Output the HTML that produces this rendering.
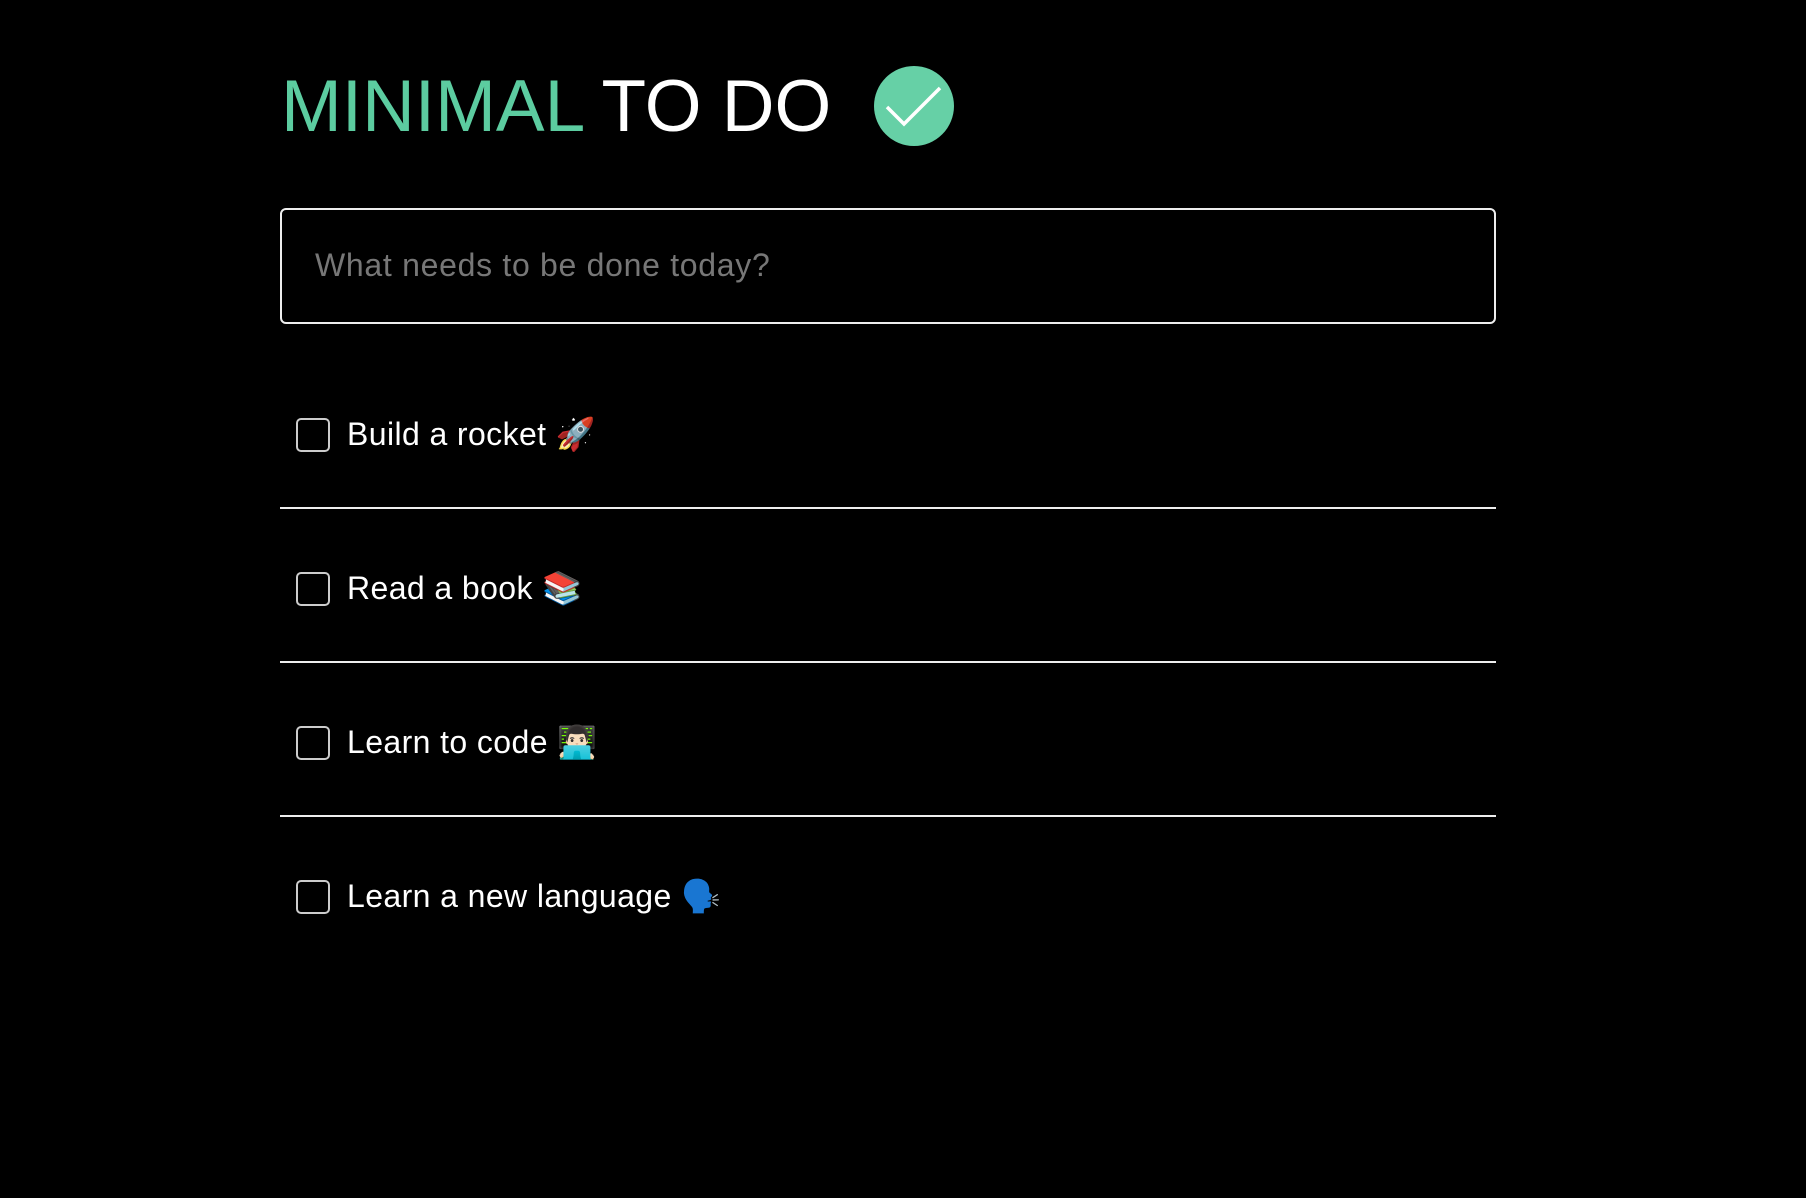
<!DOCTYPE html>
<html><head><meta charset="utf-8"><style>
html,body{margin:0;padding:0;background:#000;width:1806px;height:1198px;overflow:hidden}
body{font-family:"Liberation Sans","Noto Color Emoji",sans-serif;color:#fff;position:relative}
.title{position:absolute;left:281px;top:64px;font-size:73px;line-height:86px;white-space:nowrap;letter-spacing:0px}
.title .g{color:#5ccca0}
.circle{position:absolute;left:874px;top:66px;width:80px;height:80px;border-radius:50%;background:#66d0a6}
.input{position:absolute;left:280px;top:208px;width:1212px;height:112px;border:2px solid #eee;border-radius:6px;box-sizing:content-box}
.ph{position:absolute;left:315px;top:246px;font-size:32px;line-height:38px;color:#777;white-space:nowrap;letter-spacing:0.7px}
.item{position:absolute;left:296px;height:34px;width:900px}
.cb{position:absolute;left:0;top:0;width:30px;height:30px;border:2px solid #ccc;border-radius:5px}
.txt{position:absolute;left:51px;top:-3px;font-size:32px;line-height:38px;white-space:nowrap;letter-spacing:0.4px}
.sep{position:absolute;left:280px;width:1216px;height:2px;background:#eee}
</style></head><body>
<div class="title"><span class="g">MINIMAL</span> TO DO</div>
<div class="circle"><svg width="80" height="80" viewBox="0 0 80 80"><polyline points="13,41 30,58 66,22" fill="none" stroke="#fff" stroke-width="3.5"/></svg></div>
<div class="input"></div>
<div class="ph">What needs to be done today?</div>
<div class="item" style="top:418px"><div class="cb"></div><div class="txt">Build a rocket 🚀</div></div>
<div class="sep" style="top:507px"></div>
<div class="item" style="top:572px"><div class="cb"></div><div class="txt">Read a book 📚</div></div>
<div class="sep" style="top:661px"></div>
<div class="item" style="top:726px"><div class="cb"></div><div class="txt">Learn to code 👨🏻‍💻</div></div>
<div class="sep" style="top:815px"></div>
<div class="item" style="top:880px"><div class="cb"></div><div class="txt">Learn a new language 🗣️</div></div>
</body></html>
